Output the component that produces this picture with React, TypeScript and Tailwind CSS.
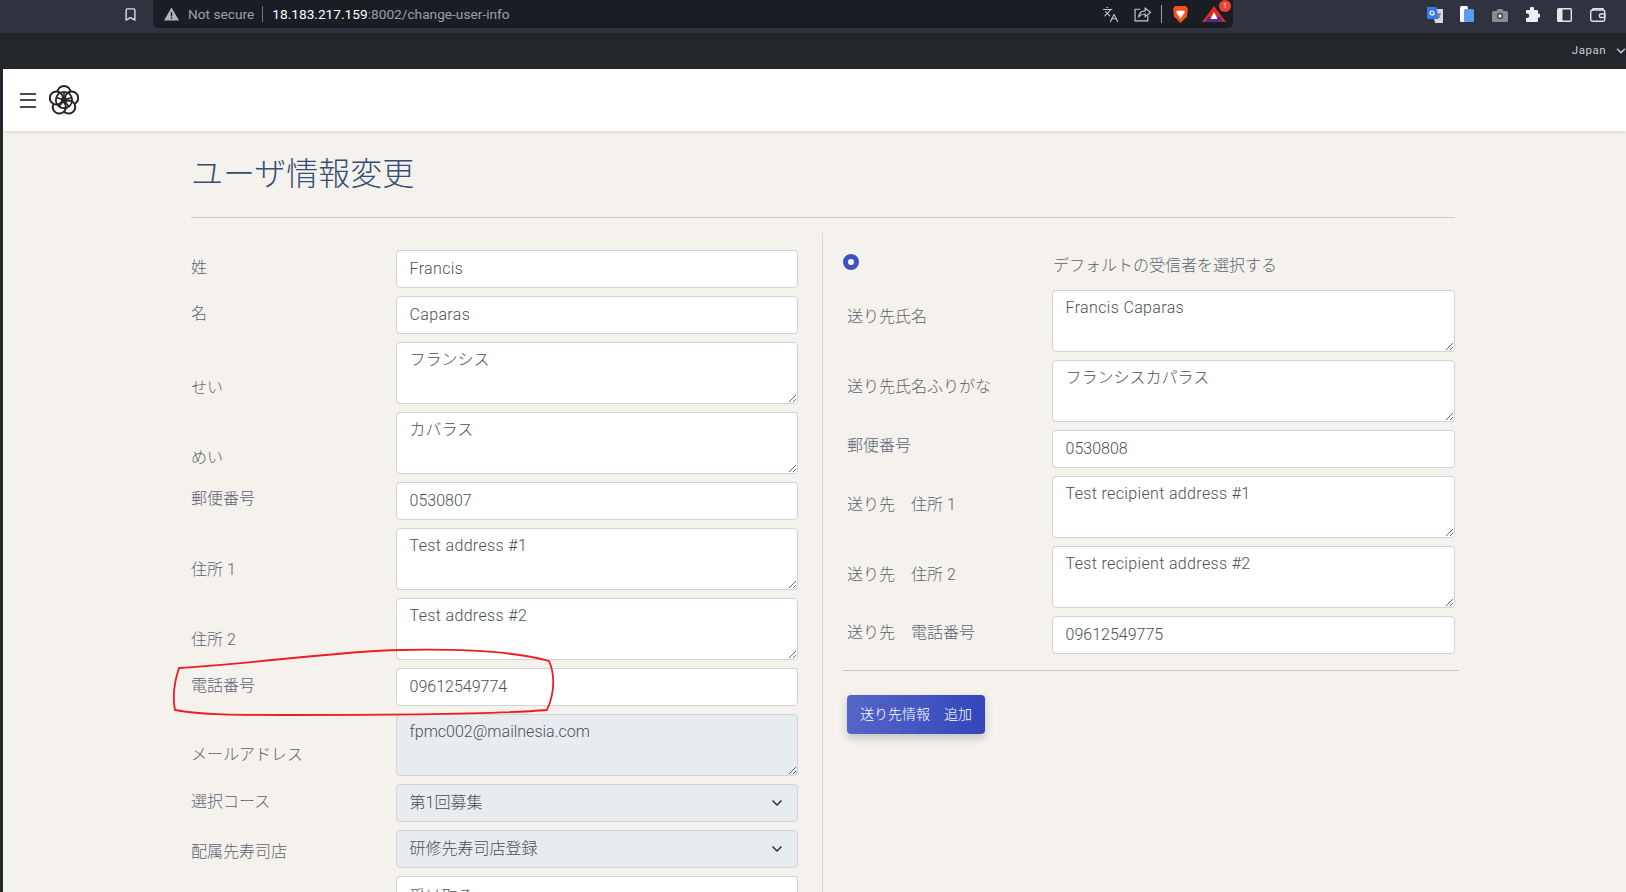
import { Bookmark, ChevronDown, Languages } from "lucide-react";

type Field = {
  label: string;
  value: string;
  kind: "input" | "textarea" | "select";
  disabled?: boolean;
  wide?: boolean;
  labelPad: string;
};

const jpFont = "font-['Roboto','Noto_Sans_CJK_JP','Noto_Sans',sans-serif]";

const leftFields: Field[] = [
  { label: "姓", value: "Francis", kind: "input", wide: true, labelPad: "pb-[8px]" },
  { label: "名", value: "Caparas", kind: "input", wide: true, labelPad: "pb-[8px]" },
  { label: "せい", value: "フランシス", kind: "textarea", labelPad: "pb-[4px]" },
  { label: "めい", value: "カバラス", kind: "textarea", labelPad: "pb-[4px]" },
  { label: "郵便番号", value: "0530807", kind: "input", labelPad: "pb-[9px]" },
  { label: "住所 1", value: "Test address #1", kind: "textarea", wide: true, labelPad: "pb-[8px]" },
  { label: "住所 2", value: "Test address #2", kind: "textarea", wide: true, labelPad: "pb-[8px]" },
  { label: "電話番号", value: "09612549774", kind: "input", labelPad: "pb-[8px]" },
  { label: "メールアドレス", value: "fpmc002@mailnesia.com", kind: "textarea", disabled: true, labelPad: "pb-[9px]" },
  { label: "選択コース", value: "第1回募集", kind: "select", disabled: true, labelPad: "pb-[8px]" },
  { label: "配属先寿司店", value: "研修先寿司店登録", kind: "select", disabled: true, labelPad: "pb-[4px]" },
  { label: "制服のサイズ", value: "受け取る", kind: "input", labelPad: "pb-[1px]" },
];

const rightFields: Field[] = [
  { label: "送り先氏名", value: "Francis Caparas", kind: "textarea", wide: true, labelPad: "pb-[23px]" },
  { label: "送り先氏名ふりがな", value: "フランシスカパラス", kind: "textarea", labelPad: "pb-[23px]" },
  { label: "郵便番号", value: "0530808", kind: "input", labelPad: "pb-[10px]" },
  { label: "送り先　住所 1", value: "Test recipient address #1", kind: "textarea", wide: true, labelPad: "pb-[21px]" },
  { label: "送り先　住所 2", value: "Test recipient address #2", kind: "textarea", wide: true, labelPad: "pb-[21px]" },
  { label: "送り先　電話番号", value: "09612549775", kind: "input", labelPad: "pb-[9px]" },
];

function Control({ field }: { field: Field }) {
  const base = `w-full rounded-[4px] border border-[#ced4da] px-[12.5px] text-[16px] font-light text-[#495057] outline-none ${jpFont}`;
  const bg = field.disabled ? "bg-[#e9ecef]" : "bg-white";
  const spacing = field.wide ? "tracking-[0.35px]" : "";

  if (field.kind === "textarea") {
    return (
      <textarea
        readOnly
        defaultValue={field.value}
        className={`${base} ${bg} ${spacing} block h-[62px] resize-y pb-[6px] pt-[5px] leading-[24px]`}
      />
    );
  }
  if (field.kind === "select") {
    return (
      <div className="relative">
        <select disabled defaultValue={field.value} className={`${base} ${bg} block h-[38px] appearance-none pb-[1px] opacity-100`}>
          <option>{field.value}</option>
        </select>
        <ChevronDown className="absolute right-[13px] top-[11px] h-4 w-4 text-[#343a40]" strokeWidth={2.5} />
      </div>
    );
  }
  return <input readOnly defaultValue={field.value} className={`${base} ${bg} ${spacing} block h-[38px] pb-[1px]`} />;
}

function Row({ field, labelWidth }: { field: Field; labelWidth: string }) {
  return (
    <div className="flex items-end">
      <label className={`${labelWidth} ${field.labelPad} shrink-0 text-[16px] font-light leading-[24px] text-[#5b6470] ${jpFont}`}>
        {field.label}
      </label>
      <div className="min-w-0 flex-1">
        <Control field={field} />
      </div>
    </div>
  );
}

// plum-blossom mark: five overlapping petals with a ring and a dark centre
function FlowerLogo() {
  const petals = [
    [15, 7.5],
    [22.6, 13],
    [19.7, 22],
    [10.3, 22],
    [7.4, 13],
  ];
  return (
    <svg width="30" height="32" viewBox="0 0 30 30" fill="none" stroke="#2b2022">
      {petals.map(([cx, cy]) => (
        <circle key={cx} cx={cx} cy={cy} r="6.6" strokeWidth="2" fill="white" />
      ))}
      <circle cx="15" cy="15" r="8.2" strokeWidth="1.8" />
      <path d="M15 15V7M15 15L22.600 12.500M15 15L19.700 21.500M15 15L10.300 21.500M15 15L7.400 12.500" strokeWidth="1.5" />
      <circle cx="15" cy="15" r="3" fill="#2b2022" stroke="none" />
    </svg>
  );
}

function BrowserBar() {
  return (
    <div className="flex h-[33px] shrink-0 items-start bg-[#30333f] font-['Roboto',sans-serif]">
      <div className="flex w-[153px] shrink-0 justify-end pr-[15px] pt-[7px]">
        <Bookmark className="h-[15px] w-[15px] text-[#dfe1e5]" strokeWidth={2.2} />
      </div>
      <div className="flex h-[28px] w-[1080px] shrink-0 items-center rounded-b-[5px] bg-[#1b1d25] pl-[11px] pr-[7px] text-[13.7px]">
        <svg width="15" height="14" viewBox="0 0 15 14" className="shrink-0">
          <path d="M7.5 0.5L15 13.5H0Z" fill="#b0b3b8" />
          <path d="M6.8 5h1.4v4.5H6.8zM6.8 10.5h1.4V12H6.8z" fill="#1b1d25" />
        </svg>
        <span className="ml-[9px] text-[#9aa0a6]">Not secure</span>
        <span className="ml-[8px] h-[16px] w-px bg-[#70747c]" />
        <span className="ml-[9px] text-white">18.183.217.159</span>
        <span className="text-[#9aa0a6]">:8002/change-user-info</span>
        <Languages className="ml-auto h-[17px] w-[17px] text-[#c4c7cc]" strokeWidth={1.5} />
        <svg width="17" height="16" viewBox="0 0 16 15" fill="none" stroke="#c4c7cc" strokeWidth="1.1" className="ml-[15px]">
          <path d="M6 3H1v11h12V9" />
          <path d="M4.500 10c.5-3.500 3-5.500 6-5.500V2L15.500 6l-5 4V7.500c-2.500 0-4.500 1-6 2.500z" />
        </svg>
        <span className="ml-[10px] h-[18px] w-px bg-[#9a9da3]" />
        <svg width="17" height="19" viewBox="0 0 16 18" className="ml-[10px]">
          <path d="M3 1h10l2 2.500-.8 7.500L8 17 1.800 11 1 3.500z" fill="#f4511e" />
          <path d="M4.500 5.500h7l.5 1.500-2 3-2 3-2-3-2-3z" fill="#ffffff" />
        </svg>
        <div className="relative ml-[13px]">
          <svg width="24" height="18" viewBox="0 0 24 18">
            <path d="M12 1L24 17H0Z" fill="#e02f20" />
            <path d="M3 17h18l-3-5H6z" fill="#5b2a8c" />
            <path d="M12 7l3.500 7h-7z" fill="#ffffff" />
          </svg>
          <span className="absolute -right-[5px] -top-[5px] flex h-[12px] w-[12px] items-center justify-center rounded-full bg-[#f0412e] text-[8px] leading-none text-white">
            1
          </span>
        </div>
      </div>
      <div className="ml-[194px] flex items-center gap-[15px] pt-[6px]">
        <svg width="16" height="17" viewBox="0 0 16 17">
          <path d="M5 3h11v14H8z" fill="#d9d9d9" />
          <path d="M0 1h9.500l2 12H0z" fill="#3b78e7" />
          <circle cx="5" cy="7" r="2" fill="none" stroke="#ffffff" strokeWidth="1.200" />
          <path d="M10.500 8h3.500M12 8v4" stroke="#555" strokeWidth="1" />
        </svg>
        <svg width="14" height="17" viewBox="0 0 14 17" className="ml-[2px]">
          <rect x="0" y="0" width="8" height="16" rx="1.500" fill="#ffffff" />
          <rect x="4" y="3" width="10" height="13" rx="1.500" fill="#5a9bf0" />
        </svg>
        <svg width="16" height="14" viewBox="0 0 16 14" className="ml-[3px]">
          <path d="M1.500 3h3l1-2h5l1 2h3A1.500 1.500 0 0 1 16 4.500v8A1.500 1.500 0 0 1 14.500 14h-13A1.500 1.500 0 0 1 0 12.500v-8A1.500 1.500 0 0 1 1.500 3z" fill="#8b8b8f" />
          <circle cx="8" cy="8" r="3" fill="#30333f" />
          <circle cx="8" cy="8" r="1.800" fill="#e8e8e8" />
        </svg>
        <svg width="15" height="15" viewBox="0 0 15 15" className="ml-[2px]">
          <path d="M5 1.500a2 2 0 0 1 4 0V3h3a1 1 0 0 1 1 1v2.500h.5a2 2 0 0 1 0 4H13V14a1 1 0 0 1-1 1H2a1 1 0 0 1-1-1v-3h1a2.200 2.200 0 0 0 0-4.500H1V4a1 1 0 0 1 1-1h3z" fill="#eceff1" />
        </svg>
        <svg width="15" height="14" viewBox="0 0 15 14" fill="none" className="ml-[2px]">
          <rect x="0.700" y="0.700" width="13.600" height="12.600" rx="1" stroke="#e4e6e8" strokeWidth="1.400" />
          <rect x="1" y="1" width="4.500" height="12" fill="#e4e6e8" />
        </svg>
        <svg width="16" height="14" viewBox="0 0 16 14" fill="none" stroke="#dfe1e5" strokeWidth="1.400" className="ml-[3px]">
          <rect x="0.700" y="2" width="14" height="11.300" rx="2" />
          <path d="M2 2.500L3 .8h10v1.500" />
          <rect x="9.500" y="6" width="5.500" height="3.500" rx="1" />
        </svg>
      </div>
    </div>
  );
}

export default function App() {
  return (
    <div className="relative flex h-[892px] w-full flex-col overflow-hidden bg-[#23262b]">
      <BrowserBar />
      <div className="flex h-[36px] shrink-0 items-center justify-end gap-[8px] pr-0 font-['Roboto',sans-serif] text-[11.5px] tracking-[0.5px] text-[#c9ccd1]">
        <span>Japan</span>
        <ChevronDown className="-mr-[2px] h-[14px] w-[14px]" strokeWidth={2.5} />
      </div>

      <div className="ml-[3px] flex min-h-0 flex-1 flex-col bg-[#f5f2ed]">
        <nav className="flex h-[62px] shrink-0 items-center gap-[13px] bg-white pl-[17px] shadow-[0_1px_4px_rgba(0,0,0,0.12)]">
          <div className="flex w-[16px] flex-col gap-[4.500px]">
            <span className="h-[2px] bg-[#454c55]" />
            <span className="h-[2px] bg-[#454c55]" />
            <span className="h-[2px] bg-[#454c55]" />
          </div>
          <FlowerLogo />
        </nav>

        <main className="ml-[188px] w-[1268px]">
          <h1 className={`flex h-[86px] items-center text-[32px] font-light text-[#344e76] ${jpFont}`}>ユーザ情報変更</h1>
          <hr className="w-[1264px] border-[#c9c9c9]" />
          <div className="mt-[15px] flex items-start">
            <div className="flex w-[607px] shrink-0 flex-col gap-[8px] pt-[17px]">
              {leftFields.map((f) => (
                <Row key={f.label} field={f} labelWidth="w-[205px]" />
              ))}
            </div>
            <div className="ml-[24px] h-[700px] w-[637px] shrink-0 border-l border-[#d9d9d9] pl-[20px] pt-[21px]">
              <div className="flex h-[36px] items-start">
                <span className="h-[16px] w-[16px] shrink-0 rounded-full border-[5px] border-[#3f51c4] bg-white" />
                <span className={`ml-[194px] mt-0 text-[16px] font-light leading-[24px] text-[#5b6470] ${jpFont}`}>
                  デフォルトの受信者を選択する
                </span>
              </div>
              <div className="flex w-[612px] flex-col gap-[8px]">
                {rightFields.map((f) => (
                  <Row key={f.label} field={f} labelWidth="w-[209px] pl-[4px]" />
                ))}
              </div>
              <hr className="mt-[16px] w-[616px] border-[#c9c9c9]" />
              <button
                className={`ml-[4px] mt-[24px] h-[39px] w-[138px] rounded-[4px] bg-linear-to-r from-[#5566c8] to-[#3346bb] pb-[1px] text-[14px] font-light text-white shadow-[0_4px_10px_rgba(0,0,0,0.2)] ${jpFont}`}
              >
                送り先情報　追加
              </button>
            </div>
          </div>
        </main>
      </div>

      <svg width="1626" height="892" viewBox="0 0 1626 892" fill="none" className="pointer-events-none absolute left-0 top-0">
        <path
          d="M179 668C250 664 340 651 400 650C450 649 510 650 549 661C554 672 556 690 547 710C500 714 380 715 286 715C240 715 200 715 175 710C172 695 175 680 179 668Z"
          stroke="#ee1c25"
          strokeWidth="1.800"
        />
      </svg>
    </div>
  );
}
